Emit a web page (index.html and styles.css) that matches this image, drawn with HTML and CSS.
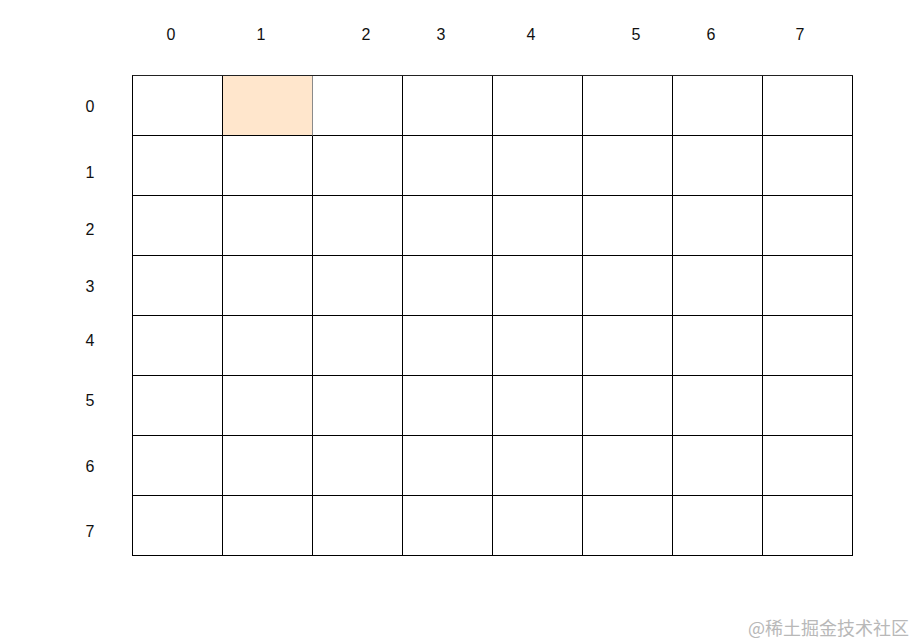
FILE: index.html
```html
<!DOCTYPE html>
<html>
<head>
<meta charset="utf-8">
<link rel="stylesheet" href="styles.css">
</head>
<body>
<div class="page">
  <div class="head">
    <div class="corner"></div>
    <div class="cols">
      <span class="col">0</span>
      <span class="col">1</span>
      <span class="col wide">2</span>
      <span class="col">3</span>
      <span class="col">4</span>
      <span class="col wide">5</span>
      <span class="col">6</span>
      <span class="col">7</span>
    </div>
  </div>
  <div class="body">
    <div class="rows">
      <span class="row">0</span>
      <span class="row">1</span>
      <span class="row">2</span>
      <span class="row">3</span>
      <span class="row">4</span>
      <span class="row">5</span>
      <span class="row">6</span>
      <span class="row">7</span>
    </div>
    <div class="grid">
      <div class="cell"></div><div class="cell hl"></div><div class="cell"></div><div class="cell"></div><div class="cell"></div><div class="cell"></div><div class="cell"></div><div class="cell"></div>
      <div class="cell"></div><div class="cell"></div><div class="cell"></div><div class="cell"></div><div class="cell"></div><div class="cell"></div><div class="cell"></div><div class="cell"></div>
      <div class="cell"></div><div class="cell"></div><div class="cell"></div><div class="cell"></div><div class="cell"></div><div class="cell"></div><div class="cell"></div><div class="cell"></div>
      <div class="cell"></div><div class="cell"></div><div class="cell"></div><div class="cell"></div><div class="cell"></div><div class="cell"></div><div class="cell"></div><div class="cell"></div>
      <div class="cell"></div><div class="cell"></div><div class="cell"></div><div class="cell"></div><div class="cell"></div><div class="cell"></div><div class="cell"></div><div class="cell"></div>
      <div class="cell"></div><div class="cell"></div><div class="cell"></div><div class="cell"></div><div class="cell"></div><div class="cell"></div><div class="cell"></div><div class="cell"></div>
      <div class="cell"></div><div class="cell"></div><div class="cell"></div><div class="cell"></div><div class="cell"></div><div class="cell"></div><div class="cell"></div><div class="cell"></div>
      <div class="cell"></div><div class="cell"></div><div class="cell"></div><div class="cell"></div><div class="cell"></div><div class="cell"></div><div class="cell"></div><div class="cell"></div>
    </div>
  </div>
  <div class="footer">@稀土掘金技术社区</div>
</div>
</body>
</html>
```
FILE: styles.css
```css
* { box-sizing: border-box; }
html, body { margin: 0; padding: 0; background: #fff; }
body {
  font-family: "Liberation Sans", Arial, sans-serif;
  font-size: 16px;
  color: #111;
  width: 913px;
  height: 643px;
  overflow: hidden;
}
.page { display: flex; flex-direction: column; }
.head { display: flex; height: 75px; }
.corner { width: 132px; }
.cols { display: grid; grid-template-columns: repeat(8, 90px); padding-top: 26px; }
.col { text-align: center; line-height: 18px; padding-right: 12px; }
.col.wide { padding-right: 0; padding-left: 18px; }
.col:last-child { padding-right: 14px; }
.body { display: flex; }
.rows { width: 132px; display: flex; flex-direction: column; }
.row { height: 60px; padding-left: 48px; text-align: center; line-height: 60px; }
.row:nth-child(1) { line-height: 64px; }
.row:nth-child(2) { line-height: 76px; }
.row:nth-child(3) { line-height: 70px; }
.row:nth-child(4) { line-height: 64px; }
.row:nth-child(5) { line-height: 52px; }
.row:nth-child(6) { line-height: 52px; }
.row:nth-child(7) { line-height: 64px; }
.row:nth-child(8) { line-height: 74px; }
.grid {
  display: grid;
  grid-template-columns: repeat(8, 90px);
  grid-auto-rows: 60px;
  border-left: 1px solid #000;
  border-top: 1px solid #222;
}
.cell { border-right: 1px solid #000; border-bottom: 1px solid #000; }
.cell.hl { background: #ffe6cc; border-right-color: #8a8a8a; }
.footer {
  margin-top: 59px;
  text-align: right;
  padding-right: 4px;
  font-family: "Noto Sans CJK SC", sans-serif;
  font-size: 18px;
  line-height: 24px;
  color: #b8b8b8;
}
```
